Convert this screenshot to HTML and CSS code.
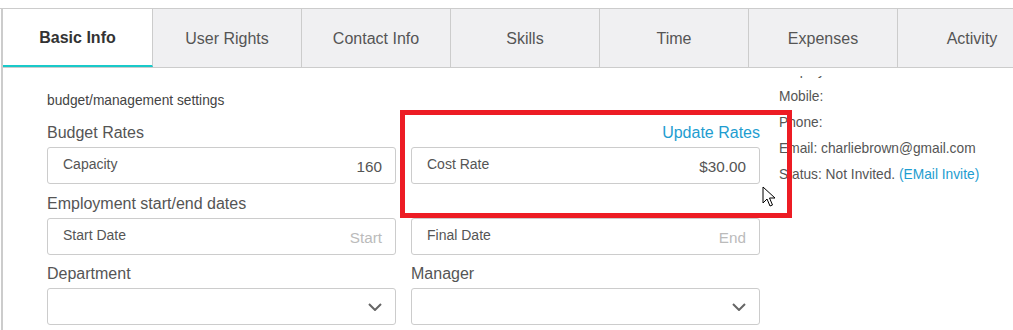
FILE: index.html
```html
<!DOCTYPE html>
<html lang="en">
<head>
    <meta charset="UTF-8">
    <meta name="viewport" content="width=device-width, initial-scale=1.0">
    <title>User Profile - Basic Info</title>
    <link rel="stylesheet" href="styles.css">
</head>
<body>
    <div class="frame">
        <div class="panel">
            <ul class="tabs">
                <li class="tab active">Basic Info</li>
                <li class="tab">User Rights</li>
                <li class="tab">Contact Info</li>
                <li class="tab">Skills</li>
                <li class="tab">Time</li>
                <li class="tab">Expenses</li>
                <li class="tab">Activity</li>
            </ul>

            <div class="content">
                <div class="main">
                    <p class="note">budget/management settings</p>

                    <div class="form-grid">
                        <div class="label">Budget Rates</div>
                        <div class="label right"><a class="link" href="#">Update Rates</a></div>
                        <div class="field">
                            <span class="field-label">Capacity</span>
                            <span class="field-value">160</span>
                        </div>
                        <div class="field">
                            <span class="field-label">Cost Rate</span>
                            <span class="field-value">$30.00</span>
                        </div>

                        <div class="label">Employment start/end dates</div>
                        <div class="label"></div>
                        <div class="field">
                            <span class="field-label">Start Date</span>
                            <span class="field-value placeholder">Start</span>
                        </div>
                        <div class="field">
                            <span class="field-label">Final Date</span>
                            <span class="field-value placeholder">End</span>
                        </div>

                        <div class="label">Department</div>
                        <div class="label">Manager</div>
                        <div class="field select">
                            <svg class="chevron" width="14" height="8" viewBox="0 0 14 8"><polyline points="1,1 7,7 13,1" fill="none" stroke="#666" stroke-width="2"/></svg>
                        </div>
                        <div class="field select">
                            <svg class="chevron" width="14" height="8" viewBox="0 0 14 8"><polyline points="1,1 7,7 13,1" fill="none" stroke="#666" stroke-width="2"/></svg>
                        </div>
                    </div>
                </div>

                <div class="info">
                    <p class="hidden-line">Employee ID:</p>
                    <p>Mobile:</p>
                    <p>Phone:</p>
                    <p>Email: charliebrown@gmail.com</p>
                    <p>Status: Not Invited. <a class="link" href="#">(EMail Invite)</a></p>
                </div>
            </div>
        </div>
    </div>

    <div class="highlight"></div>
    <svg class="cursor" width="14" height="22" viewBox="0 0 14 22">
        <path d="M1 1 L1 17 L5 13 L8 20 L10.5 19 L7.5 12 L13 12 Z" fill="#fff" stroke="#000" stroke-width="1" stroke-linejoin="round"/>
    </svg>
</body>
</html>
```

FILE: styles.css
```css
body {
    font-family: "Liberation Sans", Arial, sans-serif;
    margin: 0;
    background: #fff;
    color: #555;
    width: 1013px;
    height: 330px;
    overflow: hidden;
    position: relative;
}
.frame {
    margin-top: 8px;
    border-top: 1px solid #ccc;
}
.panel {
    margin-left: 1px;
    border-left: 2px solid #ccc;
    height: 330px;
}
.tabs {
    list-style: none;
    margin: 0;
    padding: 0;
    display: flex;
    overflow: hidden;
    border-bottom: 1px solid #ccc;
}
.tab {
    flex: 0 0 149px;
    height: 58px;
    box-sizing: border-box;
    display: flex;
    align-items: center;
    justify-content: center;
    padding-top: 2px;
    background: #f0f0f2;
    border-right: 1px solid #ccc;
    font-size: 16px;
    color: #555;
}
.tab.active {
    flex-basis: 150px;
    background: #fff;
    color: #333;
    font-weight: bold;
    border-bottom: 2px solid #19c9c9;
}
.content {
    display: flex;
    padding-left: 44px;
}
.main {
    width: 713px;
    padding-top: 25px;
}
.note {
    margin: 0 0 14px;
    font-size: 13.75px;
    line-height: 16px;
    color: #444;
}
.form-grid {
    display: grid;
    grid-template-columns: 349px 349px;
    column-gap: 15px;
}
.label {
    height: 20px;
    line-height: 20px;
    margin-bottom: 4px;
    font-size: 16px;
    color: #555;
}
.label.right {
    text-align: right;
}
.link {
    color: #1e9dd0;
    text-decoration: none;
}
.field {
    height: 37px;
    box-sizing: border-box;
    margin-bottom: 9.5px;
    border: 1px solid #ccc;
    border-radius: 3px;
    display: flex;
    align-items: center;
    justify-content: space-between;
    padding: 0 13px 0 15px;
}
.field-label {
    font-size: 14px;
    color: #555;
    margin-bottom: 3px;
}
.field-value {
    font-size: 15.25px;
    color: #555;
    margin-top: 2px;
}
.field-value.placeholder {
    color: #bbb;
}
.field.select {
    justify-content: flex-end;
    padding-right: 13px;
}
.info {
    margin-left: 19px;
    margin-top: 8px;
    overflow: hidden;
    font-size: 13.75px;
    color: #555;
    height: 120px;
}
.info p {
    margin: 0;
    line-height: 26px;
    white-space: nowrap;
}
.info .hidden-line {
    margin-top: -18px;
}
.highlight {
    position: absolute;
    left: 400px;
    top: 110px;
    width: 392px;
    height: 108px;
    box-sizing: border-box;
    border: 5px solid #ed1c24;
}
.cursor {
    position: absolute;
    left: 762px;
    top: 186px;
}
```
